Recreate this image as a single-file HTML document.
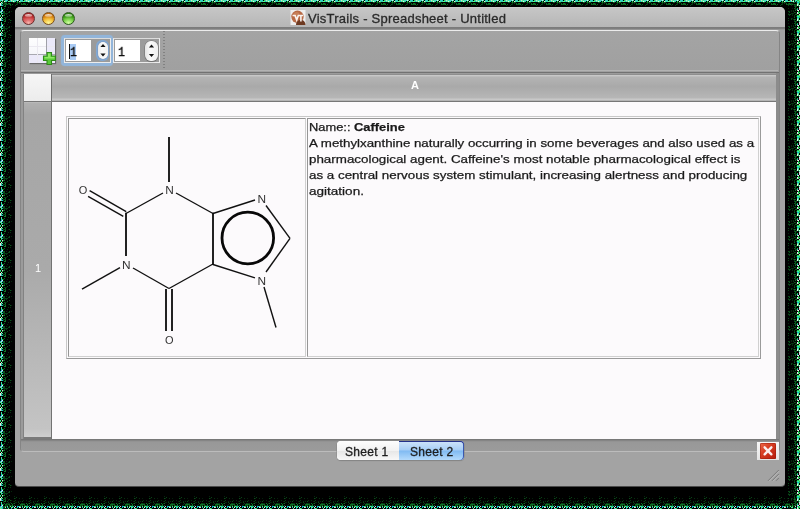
<!DOCTYPE html>
<html><head><meta charset="utf-8">
<style>
*{margin:0;padding:0;box-sizing:border-box}
html,body{width:800px;height:509px;overflow:hidden;background:#000}
body{position:relative;font-family:"Liberation Sans",sans-serif}
.a{position:absolute}
.g{will-change:transform}
#win{left:15px;top:7px;width:770px;height:480px;border-bottom:1px solid #4a4a4a;background:#a3a3a3;border-radius:5px 5px 4px 4px;overflow:hidden}
#title{left:15px;top:7px;width:770px;height:20px;background:linear-gradient(#d4d4d4 0,#c6c6c6 1px,#b6b6b6 100%);border-radius:5px 5px 0 0}
#tline{left:15px;top:27px;width:770px;height:3px;background:linear-gradient(#7a7a7a 0,#808080 2px,#959595 2px)}
.tl{width:13px;height:13px;border-radius:50%;top:12px}
#ttl{left:308px;top:10.5px;font-size:13px;line-height:16px;color:#2a2a2a;-webkit-text-stroke:0.3px #2a2a2a;white-space:nowrap;letter-spacing:0.24px}
#frame{left:20px;top:30px;width:760px;height:422px;border:1px solid #858585;border-top:1px solid #ececec;border-bottom:1px solid #bcbcbc;border-radius:4px;background:linear-gradient(#a4a4a4,#a0a0a0 40px)}
#tbot1{left:21px;top:70px;width:757px;height:1px;background:#b3b3b3}
#tbot2{left:21px;top:72px;width:758px;height:1px;background:#727272}
#sheet{left:21px;top:73px;width:758px;height:367px;background:#9b9b9b}
#corner{left:23px;top:74px;width:29px;height:28px;border-left:1px solid #828282;background:linear-gradient(#f6f6f6,#ececec);border-right:1px solid #6e6e6e;border-bottom:1px solid #6e6e6e}
#colh{left:52px;top:74px;width:724px;height:28px;background:linear-gradient(#8e8e8e 0,#8e8e8e 1px,#cccccc 1px,#c4c4c4 2px,#b4b4b4 3px,#a9a9a9 45%,#b6b6b6 84%,#c6c6c6 90%,#cbcbcb 93%,#a8a8a8 95.5%,#777 96.5%,#777 100%)}
#rowh{left:23px;top:101px;width:29px;height:338px;background:linear-gradient(#777 0,#777 1px,#c2c2c2 1px,#b0b0b0 2px,#a6a6a6 4%,#aaaaaa 50%,#c4c4c4 97%,#cfcfcf 99.5%,#7a7a7a 99.5%);border-right:1px solid #727272;border-left:1px solid #828282}
#white{left:52px;top:102px;width:724px;height:337px;background:#fcfafc}
#rline{left:776px;top:73px;width:3px;height:367px;background:#8c8c8c}
#tabs{left:21px;top:439px;width:758px;height:12px;background:linear-gradient(#747474 0,#7c7c7c 1px,#8e8e8e 2px,#989898 3px,#9b9b9b 100%);border-radius:0 0 4px 4px}
.hdr{color:#fff;font-size:11px;font-weight:bold}
.desc{left:309px;font-size:11px;color:#1a1a1a;-webkit-text-stroke:0.25px #1a1a1a;white-space:nowrap;transform-origin:0 0;line-height:16px}
</style></head><body>
<!-- shadow edge noise -->
<svg class="a" style="left:0;top:0" width="800" height="509"><defs><pattern id="pt" width="15" height="6" patternUnits="userSpaceOnUse"><rect x="0" y="0" width="1" height="1" fill="#60f090"/><rect x="0" y="1" width="1" height="1" fill="#18c0d0"/><rect x="0" y="5" width="1" height="1" fill="#084617"/><rect x="1" y="0" width="1" height="1" fill="#30d8e0"/><rect x="1" y="2" width="1" height="1" fill="#073f15"/><rect x="1" y="4" width="1" height="1" fill="#094d19"/><rect x="2" y="0" width="1" height="1" fill="#e8e8e8"/><rect x="2" y="1" width="1" height="1" fill="#20d050"/><rect x="2" y="2" width="1" height="1" fill="#10812b"/><rect x="2" y="3" width="1" height="1" fill="#084216"/><rect x="2" y="4" width="1" height="1" fill="#063210"/><rect x="3" y="0" width="1" height="1" fill="#40e8a0"/><rect x="3" y="2" width="1" height="1" fill="#094b19"/><rect x="4" y="1" width="1" height="1" fill="#e8e8e8"/><rect x="4" y="2" width="1" height="1" fill="#0c6020"/><rect x="4" y="3" width="1" height="1" fill="#084416"/><rect x="5" y="0" width="1" height="1" fill="#18c0d0"/><rect x="5" y="1" width="1" height="1" fill="#60f090"/><rect x="5" y="2" width="1" height="1" fill="#0b5f1f"/><rect x="6" y="0" width="1" height="1" fill="#40e8a0"/><rect x="6" y="1" width="1" height="1" fill="#18c0d0"/><rect x="6" y="3" width="1" height="1" fill="#0c6521"/><rect x="6" y="4" width="1" height="1" fill="#0c6722"/><rect x="7" y="0" width="1" height="1" fill="#18c0d0"/><rect x="7" y="1" width="1" height="1" fill="#40e8a0"/><rect x="7" y="4" width="1" height="1" fill="#0a511b"/><rect x="8" y="1" width="1" height="1" fill="#60f090"/><rect x="8" y="3" width="1" height="1" fill="#0d6d24"/><rect x="8" y="4" width="1" height="1" fill="#0c6120"/><rect x="9" y="0" width="1" height="1" fill="#20d050"/><rect x="9" y="1" width="1" height="1" fill="#60f090"/><rect x="9" y="3" width="1" height="1" fill="#0e7727"/><rect x="9" y="4" width="1" height="1" fill="#0b5a1e"/><rect x="10" y="0" width="1" height="1" fill="#40e8a0"/><rect x="10" y="1" width="1" height="1" fill="#10b8c8"/><rect x="10" y="3" width="1" height="1" fill="#073812"/><rect x="10" y="4" width="1" height="1" fill="#0f7e2a"/><rect x="11" y="0" width="1" height="1" fill="#d8c8d8"/><rect x="11" y="1" width="1" height="1" fill="#60f090"/><rect x="11" y="5" width="1" height="1" fill="#063612"/><rect x="12" y="0" width="1" height="1" fill="#60f090"/><rect x="12" y="1" width="1" height="1" fill="#40e8a0"/><rect x="12" y="4" width="1" height="1" fill="#0c6622"/><rect x="13" y="0" width="1" height="1" fill="#40e8a0"/><rect x="13" y="1" width="1" height="1" fill="#e8e8e8"/><rect x="13" y="2" width="1" height="1" fill="#0d6c24"/><rect x="14" y="0" width="1" height="1" fill="#30d8e0"/><rect x="14" y="1" width="1" height="1" fill="#60f090"/><rect x="14" y="2" width="1" height="1" fill="#0a571d"/></pattern><pattern id="pb" y="495" width="15" height="14" patternUnits="userSpaceOnUse"><rect x="0" y="13" width="1" height="1" fill="#60f090"/><rect x="0" y="11" width="1" height="1" fill="#d8c8d8"/><rect x="0" y="7" width="1" height="1" fill="#052b0e"/><rect x="0" y="5" width="1" height="1" fill="#073812"/><rect x="0" y="3" width="1" height="1" fill="#05290d"/><rect x="1" y="13" width="1" height="1" fill="#20d050"/><rect x="1" y="7" width="1" height="1" fill="#04200a"/><rect x="1" y="2" width="1" height="1" fill="#084416"/><rect x="2" y="12" width="1" height="1" fill="#18c0d0"/><rect x="2" y="11" width="1" height="1" fill="#10b8c8"/><rect x="2" y="10" width="1" height="1" fill="#063712"/><rect x="3" y="11" width="1" height="1" fill="#10b8c8"/><rect x="3" y="9" width="1" height="1" fill="#063311"/><rect x="3" y="7" width="1" height="1" fill="#084617"/><rect x="3" y="6" width="1" height="1" fill="#052e0f"/><rect x="4" y="12" width="1" height="1" fill="#e8e8e8"/><rect x="4" y="11" width="1" height="1" fill="#40e8a0"/><rect x="4" y="8" width="1" height="1" fill="#084015"/><rect x="4" y="3" width="1" height="1" fill="#063110"/><rect x="5" y="12" width="1" height="1" fill="#d8c8d8"/><rect x="5" y="11" width="1" height="1" fill="#20d050"/><rect x="5" y="10" width="1" height="1" fill="#0a521b"/><rect x="5" y="9" width="1" height="1" fill="#0d6923"/><rect x="5" y="6" width="1" height="1" fill="#052b0e"/><rect x="6" y="10" width="1" height="1" fill="#084717"/><rect x="6" y="9" width="1" height="1" fill="#0d6e24"/><rect x="6" y="8" width="1" height="1" fill="#094d19"/><rect x="7" y="12" width="1" height="1" fill="#10b8c8"/><rect x="7" y="11" width="1" height="1" fill="#60f090"/><rect x="7" y="10" width="1" height="1" fill="#0b5f1f"/><rect x="7" y="9" width="1" height="1" fill="#0f7a28"/><rect x="7" y="8" width="1" height="1" fill="#084316"/><rect x="7" y="6" width="1" height="1" fill="#094f1a"/><rect x="7" y="3" width="1" height="1" fill="#04210b"/><rect x="8" y="13" width="1" height="1" fill="#60f090"/><rect x="8" y="9" width="1" height="1" fill="#0d6e24"/><rect x="8" y="8" width="1" height="1" fill="#063311"/><rect x="8" y="5" width="1" height="1" fill="#052c0e"/><rect x="9" y="12" width="1" height="1" fill="#e8e8e8"/><rect x="9" y="11" width="1" height="1" fill="#20d050"/><rect x="9" y="10" width="1" height="1" fill="#0c6321"/><rect x="9" y="9" width="1" height="1" fill="#0d6c24"/><rect x="9" y="8" width="1" height="1" fill="#063210"/><rect x="10" y="11" width="1" height="1" fill="#60f090"/><rect x="10" y="10" width="1" height="1" fill="#0a511b"/><rect x="11" y="13" width="1" height="1" fill="#10b8c8"/><rect x="11" y="12" width="1" height="1" fill="#40e8a0"/><rect x="11" y="11" width="1" height="1" fill="#18c0d0"/><rect x="11" y="10" width="1" height="1" fill="#073a13"/><rect x="11" y="8" width="1" height="1" fill="#0e7627"/><rect x="11" y="5" width="1" height="1" fill="#04270d"/><rect x="12" y="12" width="1" height="1" fill="#60f090"/><rect x="12" y="11" width="1" height="1" fill="#20d050"/><rect x="12" y="10" width="1" height="1" fill="#0f7928"/><rect x="12" y="9" width="1" height="1" fill="#0f7928"/><rect x="13" y="11" width="1" height="1" fill="#10b8c8"/><rect x="13" y="8" width="1" height="1" fill="#063210"/><rect x="13" y="6" width="1" height="1" fill="#04200a"/><rect x="14" y="13" width="1" height="1" fill="#10b8c8"/><rect x="14" y="12" width="1" height="1" fill="#e8e8e8"/><rect x="14" y="10" width="1" height="1" fill="#0d6e24"/><rect x="14" y="8" width="1" height="1" fill="#0d6e24"/><rect x="14" y="6" width="1" height="1" fill="#073812"/><rect x="14" y="3" width="1" height="1" fill="#094f1a"/><rect x="14" y="1" width="1" height="1" fill="#04270d"/></pattern><pattern id="pl"  width="12" height="15" patternUnits="userSpaceOnUse"><rect x="0" y="0" width="1" height="1" fill="#40e8a0"/><rect x="2" y="0" width="1" height="1" fill="#d8c8d8"/><rect x="3" y="0" width="1" height="1" fill="#0f7c29"/><rect x="4" y="0" width="1" height="1" fill="#0e7326"/><rect x="9" y="0" width="1" height="1" fill="#084617"/><rect x="0" y="1" width="1" height="1" fill="#20d050"/><rect x="2" y="1" width="1" height="1" fill="#20d050"/><rect x="7" y="1" width="1" height="1" fill="#094d19"/><rect x="1" y="2" width="1" height="1" fill="#e8e8e8"/><rect x="4" y="2" width="1" height="1" fill="#0a501a"/><rect x="5" y="2" width="1" height="1" fill="#073d14"/><rect x="6" y="2" width="1" height="1" fill="#04240c"/><rect x="0" y="3" width="1" height="1" fill="#e8e8e8"/><rect x="1" y="3" width="1" height="1" fill="#20d050"/><rect x="2" y="3" width="1" height="1" fill="#40e8a0"/><rect x="5" y="3" width="1" height="1" fill="#0e7226"/><rect x="0" y="4" width="1" height="1" fill="#e8e8e8"/><rect x="1" y="4" width="1" height="1" fill="#10b8c8"/><rect x="3" y="4" width="1" height="1" fill="#094a18"/><rect x="4" y="4" width="1" height="1" fill="#094c19"/><rect x="5" y="4" width="1" height="1" fill="#084617"/><rect x="8" y="4" width="1" height="1" fill="#04210b"/><rect x="9" y="4" width="1" height="1" fill="#094918"/><rect x="0" y="5" width="1" height="1" fill="#d8c8d8"/><rect x="1" y="5" width="1" height="1" fill="#40e8a0"/><rect x="2" y="5" width="1" height="1" fill="#10b8c8"/><rect x="3" y="5" width="1" height="1" fill="#063712"/><rect x="5" y="5" width="1" height="1" fill="#0d6c24"/><rect x="10" y="5" width="1" height="1" fill="#0a501a"/><rect x="11" y="5" width="1" height="1" fill="#04230b"/><rect x="4" y="6" width="1" height="1" fill="#0f7e2a"/><rect x="5" y="6" width="1" height="1" fill="#0f7c29"/><rect x="1" y="7" width="1" height="1" fill="#40e8a0"/><rect x="8" y="7" width="1" height="1" fill="#063311"/><rect x="10" y="7" width="1" height="1" fill="#063411"/><rect x="1" y="8" width="1" height="1" fill="#40e8a0"/><rect x="4" y="8" width="1" height="1" fill="#0c6521"/><rect x="1" y="9" width="1" height="1" fill="#10b8c8"/><rect x="2" y="9" width="1" height="1" fill="#20d050"/><rect x="3" y="9" width="1" height="1" fill="#0c6521"/><rect x="7" y="9" width="1" height="1" fill="#052e0f"/><rect x="1" y="10" width="1" height="1" fill="#18c0d0"/><rect x="2" y="10" width="1" height="1" fill="#e8e8e8"/><rect x="0" y="11" width="1" height="1" fill="#10b8c8"/><rect x="1" y="11" width="1" height="1" fill="#d8c8d8"/><rect x="2" y="11" width="1" height="1" fill="#10b8c8"/><rect x="3" y="11" width="1" height="1" fill="#0b591d"/><rect x="4" y="11" width="1" height="1" fill="#0a561c"/><rect x="6" y="11" width="1" height="1" fill="#063010"/><rect x="9" y="11" width="1" height="1" fill="#094f1a"/><rect x="11" y="11" width="1" height="1" fill="#05280d"/><rect x="0" y="12" width="1" height="1" fill="#60f090"/><rect x="1" y="12" width="1" height="1" fill="#40e8a0"/><rect x="3" y="12" width="1" height="1" fill="#0b5a1e"/><rect x="4" y="12" width="1" height="1" fill="#094e1a"/><rect x="8" y="12" width="1" height="1" fill="#073f15"/><rect x="9" y="12" width="1" height="1" fill="#094c19"/><rect x="1" y="13" width="1" height="1" fill="#60f090"/><rect x="2" y="13" width="1" height="1" fill="#10b8c8"/><rect x="3" y="13" width="1" height="1" fill="#084115"/><rect x="4" y="13" width="1" height="1" fill="#073812"/><rect x="5" y="13" width="1" height="1" fill="#084517"/><rect x="6" y="13" width="1" height="1" fill="#073a13"/><rect x="7" y="13" width="1" height="1" fill="#073812"/><rect x="1" y="14" width="1" height="1" fill="#20d050"/><rect x="4" y="14" width="1" height="1" fill="#084015"/><rect x="6" y="14" width="1" height="1" fill="#073e14"/></pattern><pattern id="pr" x="786" width="14" height="15" patternUnits="userSpaceOnUse"><rect x="13" y="0" width="1" height="1" fill="#60f090"/><rect x="12" y="0" width="1" height="1" fill="#20d050"/><rect x="11" y="0" width="1" height="1" fill="#20d050"/><rect x="8" y="0" width="1" height="1" fill="#063712"/><rect x="6" y="0" width="1" height="1" fill="#052e0f"/><rect x="3" y="0" width="1" height="1" fill="#084015"/><rect x="13" y="1" width="1" height="1" fill="#20d050"/><rect x="12" y="1" width="1" height="1" fill="#40e8a0"/><rect x="11" y="1" width="1" height="1" fill="#40e8a0"/><rect x="10" y="1" width="1" height="1" fill="#0b5d1f"/><rect x="8" y="1" width="1" height="1" fill="#073b13"/><rect x="13" y="2" width="1" height="1" fill="#20d050"/><rect x="12" y="2" width="1" height="1" fill="#10b8c8"/><rect x="11" y="2" width="1" height="1" fill="#10b8c8"/><rect x="8" y="2" width="1" height="1" fill="#0c6120"/><rect x="12" y="3" width="1" height="1" fill="#40e8a0"/><rect x="11" y="3" width="1" height="1" fill="#60f090"/><rect x="6" y="3" width="1" height="1" fill="#04270d"/><rect x="5" y="3" width="1" height="1" fill="#094818"/><rect x="2" y="3" width="1" height="1" fill="#094b19"/><rect x="12" y="4" width="1" height="1" fill="#40e8a0"/><rect x="11" y="4" width="1" height="1" fill="#e8e8e8"/><rect x="9" y="4" width="1" height="1" fill="#094e1a"/><rect x="8" y="4" width="1" height="1" fill="#0e7426"/><rect x="7" y="4" width="1" height="1" fill="#063511"/><rect x="5" y="4" width="1" height="1" fill="#094918"/><rect x="13" y="5" width="1" height="1" fill="#e8e8e8"/><rect x="12" y="5" width="1" height="1" fill="#20d050"/><rect x="11" y="5" width="1" height="1" fill="#e8e8e8"/><rect x="10" y="5" width="1" height="1" fill="#0a561c"/><rect x="8" y="5" width="1" height="1" fill="#073913"/><rect x="2" y="5" width="1" height="1" fill="#084015"/><rect x="13" y="6" width="1" height="1" fill="#40e8a0"/><rect x="10" y="6" width="1" height="1" fill="#084416"/><rect x="9" y="6" width="1" height="1" fill="#0d6822"/><rect x="8" y="6" width="1" height="1" fill="#094e1a"/><rect x="13" y="7" width="1" height="1" fill="#e8e8e8"/><rect x="9" y="7" width="1" height="1" fill="#0b5e1f"/><rect x="13" y="8" width="1" height="1" fill="#d8c8d8"/><rect x="11" y="8" width="1" height="1" fill="#20d050"/><rect x="9" y="8" width="1" height="1" fill="#084717"/><rect x="8" y="8" width="1" height="1" fill="#0c6321"/><rect x="6" y="8" width="1" height="1" fill="#04210b"/><rect x="2" y="8" width="1" height="1" fill="#05290d"/><rect x="13" y="9" width="1" height="1" fill="#d8c8d8"/><rect x="11" y="9" width="1" height="1" fill="#18c0d0"/><rect x="10" y="9" width="1" height="1" fill="#0b5f1f"/><rect x="9" y="9" width="1" height="1" fill="#0a501a"/><rect x="12" y="10" width="1" height="1" fill="#e8e8e8"/><rect x="11" y="10" width="1" height="1" fill="#d8c8d8"/><rect x="9" y="10" width="1" height="1" fill="#0f7828"/><rect x="7" y="10" width="1" height="1" fill="#052c0e"/><rect x="5" y="10" width="1" height="1" fill="#04260c"/><rect x="12" y="11" width="1" height="1" fill="#20d050"/><rect x="7" y="11" width="1" height="1" fill="#073812"/><rect x="5" y="11" width="1" height="1" fill="#05280d"/><rect x="3" y="11" width="1" height="1" fill="#073f15"/><rect x="2" y="11" width="1" height="1" fill="#094d19"/><rect x="13" y="12" width="1" height="1" fill="#20d050"/><rect x="12" y="12" width="1" height="1" fill="#20d050"/><rect x="11" y="12" width="1" height="1" fill="#e8e8e8"/><rect x="9" y="12" width="1" height="1" fill="#084216"/><rect x="8" y="12" width="1" height="1" fill="#0a541c"/><rect x="3" y="12" width="1" height="1" fill="#094d19"/><rect x="12" y="13" width="1" height="1" fill="#60f090"/><rect x="11" y="13" width="1" height="1" fill="#e8e8e8"/><rect x="10" y="13" width="1" height="1" fill="#063612"/><rect x="7" y="13" width="1" height="1" fill="#063110"/><rect x="6" y="13" width="1" height="1" fill="#063712"/><rect x="5" y="13" width="1" height="1" fill="#063110"/><rect x="2" y="13" width="1" height="1" fill="#04220b"/><rect x="13" y="14" width="1" height="1" fill="#d8c8d8"/><rect x="10" y="14" width="1" height="1" fill="#0d6a23"/><rect x="9" y="14" width="1" height="1" fill="#0c6220"/><rect x="6" y="14" width="1" height="1" fill="#04250c"/><rect x="4" y="14" width="1" height="1" fill="#094c19"/><rect x="3" y="14" width="1" height="1" fill="#084517"/><rect x="2" y="14" width="1" height="1" fill="#084617"/></pattern></defs><rect x="0" y="0" width="800" height="6" fill="url(#pt)"/><rect x="0" y="495" width="800" height="14" fill="url(#pb)"/><rect x="0" y="0" width="12" height="509" fill="url(#pl)"/><rect x="786" y="0" width="14" height="509" fill="url(#pr)"/></svg>
<div id="win" class="a"></div>
<div id="title" class="a"></div>
<div id="tline" class="a"></div>
<div class="a tl" style="left:22px;background:radial-gradient(ellipse 70% 60% at 50% 90%,#f8b8b0 0,#e07070 45%,rgba(200,60,60,0) 100%),linear-gradient(#a02020,#c83a3a 50%,#d86060);border:1px solid #6a3030"></div>
<div class="a tl" style="left:42px;background:radial-gradient(ellipse 70% 60% at 50% 90%,#fff8a0 0,#f8d050 45%,rgba(240,180,40,0) 100%),linear-gradient(#c06808,#e09018 50%,#f0b030);border:1px solid #7a5020"></div>
<div class="a tl" style="left:62px;background:radial-gradient(ellipse 70% 60% at 50% 90%,#d8ffa8 0,#90e060 45%,rgba(90,180,40,0) 100%),linear-gradient(#2a8010,#48a820 50%,#68c038);border:1px solid #2e5a20"></div>
<div class="a" style="left:25px;top:13.5px;width:7px;height:3px;border-radius:50%;background:linear-gradient(rgba(255,255,255,.85),rgba(255,255,255,.25))"></div>
<div class="a" style="left:45px;top:13.5px;width:7px;height:3px;border-radius:50%;background:linear-gradient(rgba(255,255,255,.85),rgba(255,255,255,.25))"></div>
<div class="a" style="left:65px;top:13.5px;width:7px;height:3px;border-radius:50%;background:linear-gradient(rgba(255,255,255,.85),rgba(255,255,255,.25))"></div>
<!-- title icon -->
<svg class="a" style="left:290px;top:10px" width="16" height="16" viewBox="0 0 16 16">
  <rect x="0.5" y="0" width="15" height="15" fill="#eeeeee"/>
  <circle cx="7.5" cy="6.8" r="6.2" fill="#b86a45"/>
  <path d="M6 15 C6 11 9 9.5 12 10 C14.5 10.5 15.5 13 15.5 15z" fill="#6e3a22"/>
  <circle cx="6.5" cy="5" r="3" fill="#cf8a62" opacity=".7"/>
  <path d="M2.5 5.5h2.6l1.6 4.6 1.6-4.6h1.2M8.6 5.5h4.6M10.9 5.5v6" stroke="#fbf4f0" stroke-width="1.6" fill="none"/>
</svg>
<div id="ttl" class="a g">VisTrails - Spreadsheet - Untitled</div>

<div id="frame" class="a"></div>
<!-- toolbar icon -->
<div class="a" style="left:29px;top:38px;width:26px;height:25px;background:#ebe9f9;box-shadow:1px 1px 1px rgba(40,40,40,.45)"></div>
<div class="a" style="left:29px;top:38px;width:17px;height:16px;background:linear-gradient(#fefefe,#f6f6fa)"></div>
<div class="a" style="left:29px;top:46px;width:26px;height:1px;background:#ebe9f0"></div>
<div class="a" style="left:29px;top:54px;width:26px;height:1px;background:#a8a8b0"></div>
<div class="a" style="left:37px;top:38px;width:1px;height:25px;background:#ebe9f0"></div>
<div class="a" style="left:46px;top:38px;width:1px;height:16px;background:#a0a0a8"></div>
<svg class="a" style="left:42px;top:51px" width="15" height="15" viewBox="0 0 15 15">
  <path d="M5 1.5h4.5v3.5h4v4.5h-4v4h-4.5v-4h-3.5v-4.5h3.5z" fill="#58c838" stroke="#2e8a18" stroke-width="1.1"/>
  <path d="M6 2.5h2.5v3.5h4v1.5h-4h-2.5h-3.5v-1.5h3.5z" fill="#9ff070" opacity=".8"/>
</svg>
<!-- spinbox 1 (focused) -->
<div class="a" style="left:61px;top:35px;width:52px;height:31px;border:3px solid #92b5da;border-radius:4px;box-shadow:0 0 1px #92b5da, inset 0 0 1px #92b5da"></div>
<div class="a" style="left:64px;top:38px;width:47px;height:25px;border:1px solid #ececec;border-top-color:#dcdcdc;background:#9b9b9b"></div>
<div class="a" style="left:66px;top:40px;width:25px;height:21px;background:#fff"></div>
<div class="a" style="left:70px;top:44px;width:6px;height:16px;background:#a9cbf5"></div>
<div class="a" style="left:69px;top:44px;width:1px;height:15px;background:#111"></div>
<div class="a" style="left:70px;top:44.5px;will-change:transform;font-family:'Liberation Mono',monospace;font-size:13.5px;line-height:16px;color:#111;-webkit-text-stroke:0.4px #111;transform:scaleX(.85);transform-origin:0 0">1</div>
<div class="a" style="left:96px;top:40px;width:13px;height:21px;border-radius:6px;background:#82a9d4"></div>
<div class="a" style="left:98px;top:41.5px;width:9.5px;height:17.5px;border-radius:5px;background:linear-gradient(90deg,#e8e8e8,#fafafa 40%,#f2f2f2);box-shadow:0 0 1px #557"></div>
<!-- spinbox 2 -->
<div class="a" style="left:113px;top:38px;width:47px;height:25px;border:1px solid #ececec;border-top-color:#dcdcdc;background:#9b9b9b"></div>
<div class="a" style="left:115px;top:40px;width:25px;height:21px;background:#fff"></div>
<div class="a" style="left:117.5px;top:44.5px;will-change:transform;font-family:'Liberation Mono',monospace;font-size:13.5px;line-height:16px;color:#111;-webkit-text-stroke:0.4px #111;transform:scaleX(.85);transform-origin:0 0">1</div>
<div class="a" style="left:145px;top:41px;width:13px;height:20px;border-radius:6px;background:linear-gradient(90deg,#e4e4e4,#fafafa 40%,#eeeeee);box-shadow:0 0 0 .6px #777, 0 1px 1px rgba(0,0,0,.3)"></div>
<svg class="a" style="left:0;top:0" width="200" height="80">
  <path d="M103 44l2.6 3h-5.2z M103 56.6l2.6 -3h-5.2z" fill="#111"/>
  <path d="M151.5 44.5l2.6 3h-5.2z M151.5 57l2.6 -3h-5.2z" fill="#111"/>
  <line x1="164" y1="31" x2="164" y2="70" stroke="#7a7a7a" stroke-width="1.6" stroke-dasharray="1 2"/>
</svg>
<div id="tbot1" class="a"></div>
<div id="tbot2" class="a"></div>
<div id="sheet" class="a"></div>
<div id="rline" class="a"></div>
<div id="corner" class="a"></div>
<div id="colh" class="a"></div>
<div class="a hdr g" style="left:411px;top:80px;line-height:11px">A</div>
<div id="rowh" class="a"></div>
<div class="a hdr g" style="left:35px;top:263px;line-height:11px;font-weight:normal">1</div>
<div id="white" class="a"></div>

<!-- table -->
<div class="a" style="left:66px;top:116px;width:695px;height:243px;border:1px solid;border-color:#c8c8c8 #9a9a9a #9a9a9a #c8c8c8"></div>
<div class="a" style="left:68px;top:118px;width:238px;height:239px;border:1px solid;border-color:#969696 #d0d0d0 #d0d0d0 #969696"></div>
<div class="a" style="left:307px;top:118px;width:452px;height:239px;border:1px solid;border-color:#969696 #d0d0d0 #d0d0d0 #969696"></div>

<div class="a desc g" style="top:119px;transform:scaleX(1.17)">Name:: <b>Caffeine</b></div>
<div class="a desc g" style="top:135px;transform:scaleX(1.209)">A methylxanthine naturally occurring in some beverages and also used as a</div>
<div class="a desc g" style="top:151px;transform:scaleX(1.215)">pharmacological agent. Caffeine's most notable pharmacological effect is</div>
<div class="a desc g" style="top:167px;transform:scaleX(1.215)">as a central nervous system stimulant, increasing alertness and producing</div>
<div class="a desc g" style="top:183px;transform:scaleX(1.23)">agitation.</div>

<!-- molecule -->
<svg class="a g" style="left:0;top:0" width="800" height="509">
  <g stroke="#111" stroke-width="1.4" fill="none" stroke-linecap="butt">
    <line x1="176" y1="193" x2="213" y2="213.5"/>
    <line x1="163" y1="193" x2="126" y2="213.5"/>
    <line x1="89.6" y1="190.6" x2="126.2" y2="211.6"/>
    <line x1="88.1" y1="196.3" x2="123.3" y2="216.3"/>
    <line x1="120" y1="267.6" x2="82" y2="289.2"/>
    <line x1="133" y1="268" x2="169" y2="288.5"/>
    <line x1="169" y1="288.5" x2="213" y2="264"/>
    <line x1="213" y1="213.5" x2="255" y2="200"/>
    <line x1="213" y1="264.5" x2="255" y2="277.8"/>
    <line x1="266" y1="205.5" x2="290" y2="238.3"/>
    <line x1="290" y1="238.3" x2="266" y2="272"/>
    <line x1="264" y1="287" x2="276" y2="327.5"/>
  </g>
  <g stroke="#0a0a0a" stroke-width="1.8" fill="none">
    <line x1="169" y1="137" x2="169" y2="182"/>
    <line x1="126" y1="212.8" x2="126" y2="256"/>
    <line x1="166" y1="289" x2="166" y2="331"/>
    <line x1="172" y1="289" x2="172" y2="331"/>
    <line x1="213" y1="212.8" x2="213" y2="265"/>
  </g>
  <circle cx="247.8" cy="238" r="25.8" stroke="#080808" stroke-width="2.8" fill="none"/>
  <g font-family="Liberation Sans" font-size="11" fill="#333" text-anchor="middle" transform="translate(0,0)">
    <text x="169.6" y="194" transform="translate(169.6,194) scale(1.08,1) translate(-169.6,-194)">N</text>
    <text x="126.4" y="268.8" transform="translate(126.4,0) scale(1.08,1) translate(-126.4,0)">N</text>
    <text x="261.8" y="203" transform="translate(261.8,0) scale(1.08,1) translate(-261.8,0)">N</text>
    <text x="261.8" y="285.5" transform="translate(261.8,0) scale(1.08,1) translate(-261.8,0)">N</text>
    <text x="83" y="193.6">O</text>
    <text x="169.2" y="344">O</text>
  </g>
</svg>

<!-- tab bar -->
<div id="tabs" class="a"></div>
<div class="a" style="left:336.5px;top:441px;width:127.5px;height:19px;border-radius:4px;background:#fff;box-shadow:0 0 0 0.5px #888, 0 1px 1px rgba(0,0,0,.2)"></div>
<div class="a" style="left:336.5px;top:441px;width:62.5px;height:19px;border-radius:4px 0 0 4px;background:linear-gradient(#fdfdfd,#f2f2f2 50%,#e6e6e6 51%,#f8f8f8)"></div>
<div class="a" style="left:399px;top:441px;width:65px;height:19px;border-radius:0 4px 4px 0;background:linear-gradient(#d0e4fa,#a6cdf6 48%,#80baf2 52%,#b4dafc);box-shadow:inset 0 1px 0 #24308a, inset -1px 0 0 #3a58b0"></div>
<div class="a" style="left:345px;top:445px;font-size:12px;will-change:transform;line-height:15px;color:#1e1e1e;-webkit-text-stroke:0.3px #1e1e1e;letter-spacing:0.3px;white-space:nowrap">Sheet 1</div>
<div class="a" style="left:410px;top:445px;font-size:12px;will-change:transform;line-height:15px;color:#1e1e1e;-webkit-text-stroke:0.3px #1e1e1e;letter-spacing:0.3px;white-space:nowrap">Sheet 2</div>
<!-- close button -->
<div class="a" style="left:757px;top:442px;width:22px;height:18px;background:linear-gradient(#f6f6f6,#e4e4e4)"></div>
<div class="a" style="left:760px;top:443px;width:16px;height:15.5px;border-radius:1.5px;background:linear-gradient(135deg,#ee6848,#d43a20 45%,#b41a0c);box-shadow:inset 0 0 0 .5px #9a1a0a"></div>
<svg class="a" style="left:760px;top:443px" width="16" height="16"><path d="M4.6 4.3l6.8 7M11.4 4.3l-6.8 7" stroke="#fbeeee" stroke-width="2.4" stroke-linecap="round"/></svg>
<!-- resize grip -->
<svg class="a" style="left:764px;top:466px" width="18" height="18"><path d="M4 14.8L14.8 4M8 14.8L14.8 8M12 14.8L14.8 12" stroke="#787878" stroke-width="1"/><path d="M5 15.3L15.3 5M9 15.3L15.3 9" stroke="#c4c4c4" stroke-width="0.7"/></svg>
</body></html>
